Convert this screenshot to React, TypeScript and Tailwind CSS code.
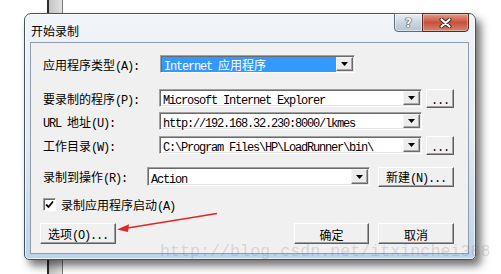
import React from "react"

const CJK = /([\u2e80-\u9fff\uff00-\uffef]+)/

// SimSun-ish mix: CJK at 12px, ASCII squeezed to 6px per char
function T({ children }: { children: string }) {
  return (
    <>
      {children
        .split(CJK)
        .filter(Boolean)
        .map((part, i) =>
          CJK.test(part) ? (
            <span key={i} className="font-['Noto_Sans_CJK_SC',sans-serif] text-[12px]">
              {part}
            </span>
          ) : (
            <span key={i} className="whitespace-pre font-['Liberation_Mono',monospace] text-[12px] tracking-[-1.2px]">
              {part}
            </span>
          )
        )}
    </>
  )
}

function DropButton() {
  return (
    <div className="my-px mr-px flex w-[17px] shrink-0 items-center justify-center border border-t-[#f4f4f4] border-l-[#f4f4f4] border-r-[#6b6b6b] border-b-[#6b6b6b] bg-[#ececec] shadow-[inset_-1px_-1px_0_#a8a8a8]">
      <svg width="7" height="4" viewBox="0 0 7 4">
        <path d="M0 0h7L3.5 4z" fill="#000" />
      </svg>
    </div>
  )
}

function Combo({ value, className, selected }: { value: string; className: string; selected?: boolean }) {
  return (
    <div
      className={`flex shrink-0 items-stretch border border-[#a0a0a0] border-r-white border-b-white bg-white shadow-[inset_1px_1px_0_#6b6b6b,inset_-1px_-1px_0_#e3e3e3] ${className}`}
    >
      <div className="flex flex-1 items-center pl-px pt-px">
        <div
          className={
            selected
              ? "flex h-full flex-1 items-center bg-[#3399ff] pl-[2px] text-white"
              : "flex h-full flex-1 items-center pl-[2px] text-black"
          }
        >
          <span className="whitespace-nowrap leading-none">
            <T>{value}</T>
          </span>
        </div>
      </div>
      <DropButton />
    </div>
  )
}

function Btn({ label, className }: { label: string; className: string }) {
  return (
    <div
      className={`flex shrink-0 items-center justify-center border border-t-white border-l-white border-r-[#5e5e5e] border-b-[#5e5e5e] bg-[#f0f0f0] leading-none text-black shadow-[inset_-1px_-1px_0_#a0a0a0] ${className}`}
    >
      <span className="whitespace-nowrap leading-none">
        <T>{label}</T>
      </span>
    </div>
  )
}

function Label({ text, className }: { text: string; className: string }) {
  return (
    <div className={`shrink-0 whitespace-nowrap leading-none text-black ${className}`}>
      <T>{text}</T>
    </div>
  )
}

export default function App() {
  return (
    <div className="relative h-[274px] w-[501px] overflow-hidden bg-white pl-[24px] pt-[13px]">
      {/* window behind */}
      <div className="absolute top-0 bottom-0 left-[47px] w-[16px] border-l-2 border-r border-l-[#2c2c2c] border-r-[#7a7a7a] bg-gradient-to-r from-[#c4c4c4] to-[#e2e2e2]" />

      {/* dialog */}
      <div className="relative flex h-[247px] w-[452px] flex-col rounded-t-[7px] rounded-b-[5px] border border-[#46525e] bg-gradient-to-b from-[#f1f4f8] via-[#e3ebf4] to-[#bcd3ec] shadow-[5px_6px_9px_rgba(0,0,0,0.55),inset_0_0_0_1px_rgba(255,255,255,0.7)]">
        {/* title bar */}
        <div className="flex h-[28px] shrink-0 items-start">
          <div className="pl-[6px] pt-[8px] leading-none text-black">
            <T>开始录制</T>
          </div>
          <div className="-mt-px mr-[6px] ml-auto flex">
            <div className="flex h-[19px] w-[29px] items-center justify-center rounded-bl-[4px] border border-[#5d6b7a] bg-gradient-to-b from-[#e9eef4] via-[#cdd6e0] to-[#b6c3d1] shadow-[inset_0_0_0_1px_rgba(255,255,255,0.5)]">
              <span className="font-['DejaVu_Sans',sans-serif] text-[12px] leading-none font-bold text-white [text-shadow:0_0_1px_#333,0_0_1px_#333,0_0_1px_#333]">
                ?
              </span>
            </div>
            <div className="-ml-px flex h-[19px] w-[47px] items-center justify-center rounded-br-[4px] border border-[#5a2820] bg-gradient-to-b from-[#e29a88] via-[#c8513b] to-[#d2836c] shadow-[inset_0_0_0_1px_rgba(255,255,255,0.35)]">
              <svg width="13" height="10" viewBox="0 0 13 10">
                <path d="M2.5 1.5l8 7M10.5 1.5l-8 7" stroke="#3b2420" strokeWidth="4" strokeLinecap="round" />
                <path d="M2.5 1.5l8 7M10.5 1.5l-8 7" stroke="#fff" strokeWidth="2.2" strokeLinecap="round" />
              </svg>
            </div>
          </div>
        </div>

        {/* client area */}
        <div className="ml-[5px] flex h-[212px] w-[439px] flex-col border border-[#8e9cab] bg-[#f0f0f0] pt-[12px] pl-[12px]">
          <div className="flex h-[18px] items-center">
            <Label text="应用程序类型(A):" className="w-[117px]" />
            <Combo value="Internet 应用程序" className="h-[18px] w-[195px]" selected />
          </div>

          <div className="mt-[16px] flex h-[18px] items-center">
            <Label text="要录制的程序(P):" className="w-[116px]" />
            <Combo value="Microsoft Internet Explorer" className="h-[18px] w-[263px]" />
            <Btn label="..." className="ml-[4px] h-[19px] w-[28px]" />
          </div>

          <div className="mt-[5px] flex h-[18px] items-center">
            <Label text="URL 地址(U):" className="w-[116px]" />
            <Combo value="http://192.168.32.230:8000/lkmes" className="h-[18px] w-[263px]" />
          </div>

          <div className="mt-[6px] flex h-[18px] items-center">
            <Label text="工作目录(W):" className="w-[116px]" />
            <Combo value="C:\Program Files\HP\LoadRunner\bin\" className="h-[18px] w-[263px]" />
            <Btn label="..." className="ml-[4px] h-[19px] w-[28px]" />
          </div>

          <div className="mt-[13px] flex h-[19px] items-center">
            <Label text="录制到操作(R):" className="w-[104px]" />
            <Combo value="Action" className="h-[19px] w-[223px]" />
            <Btn label="新建(N)..." className="ml-[8px] h-[20px] w-[76px]" />
          </div>

          <div className="mt-[12px] flex h-[13px] items-center">
            <div className="flex h-[13px] w-[13px] items-center justify-center border border-[#a0a0a0] border-r-white border-b-white bg-white shadow-[inset_1px_1px_0_#6b6b6b]">
              <svg width="9" height="9" viewBox="0 0 9 9">
                <path d="M1 4.5l2.5 2.5L8 1.5" fill="none" stroke="#000" strokeWidth="1.8" />
              </svg>
            </div>
            <Label text="录制应用程序启动(A)" className="ml-[5px]" />
          </div>

          <div className="mt-[12px] -ml-[3px] flex h-[21px] items-center">
            <Btn label="选项(O)..." className="h-[21px] w-[76px]" />
            <Btn label="确定" className="ml-[178px] h-[21px] w-[75px]" />
            <Btn label="取消" className="ml-[9px] h-[21px] w-[76px]" />
          </div>
        </div>
      </div>

      {/* red arrow annotation */}
      <svg className="absolute top-0 left-0" width="501" height="274" viewBox="0 0 501 274">
        <path d="M217 213.5L126 228.2" stroke="#e02626" strokeWidth="1.4" />
        <path d="M117 229.5l12-5.2-1 7.6z" fill="#e02626" />
      </svg>

      {/* watermark */}
      <div className="pointer-events-none absolute top-[244px] left-[160px] font-['Liberation_Mono',monospace] text-[16.7px] leading-none whitespace-nowrap text-[rgba(110,110,110,0.22)]">
        http://blog.csdn.net/itxinchei388
      </div>
    </div>
  )
}
